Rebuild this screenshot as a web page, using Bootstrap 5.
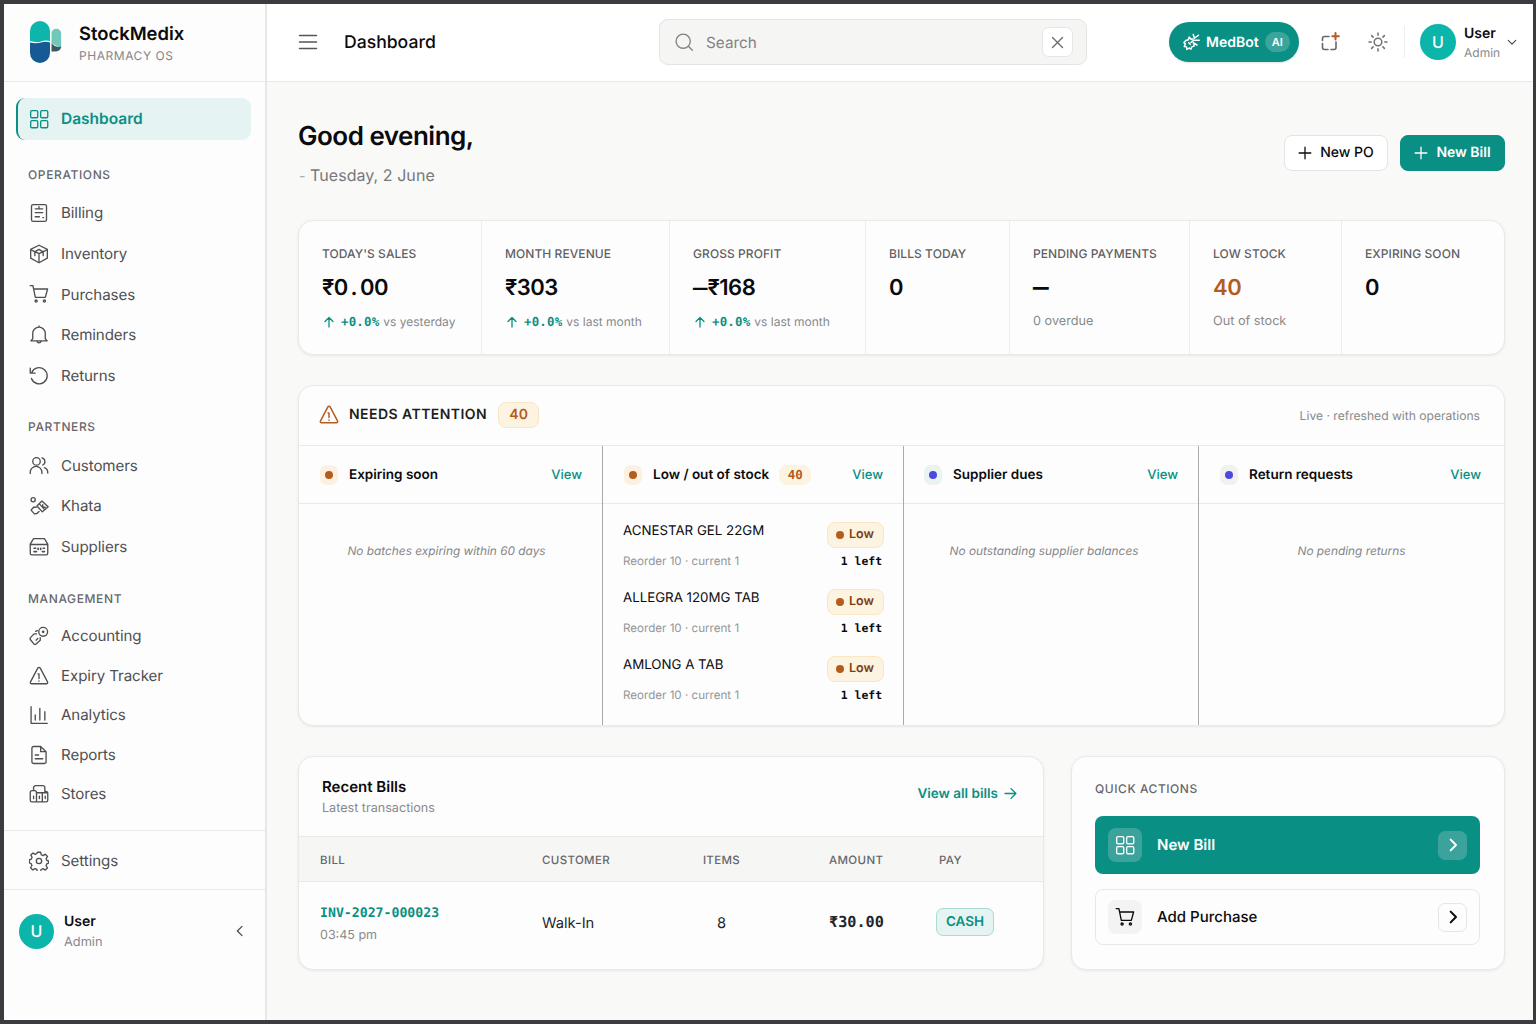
<!DOCTYPE html>
<html lang="en">
<head>
<meta charset="utf-8">
<meta name="viewport" content="width=device-width, initial-scale=1">
<title>StockMedix – Dashboard</title>
<link href="https://cdn.jsdelivr.net/npm/bootstrap@5.3.0/dist/css/bootstrap.min.css" rel="stylesheet">
<style>
:root{--teal:#0a8f84;--teal-bright:#0bb5aa;--amber:#b35c1e;--line:#e9e9e8;--ink:#0b0b0d;--muted:#88898b}
body{font-family:Inter,"Liberation Sans",sans-serif;color:var(--ink);background:#3b3c3f;height:1024px;overflow:hidden;font-size:14px;line-height:1.3;text-rendering:geometricPrecision}
.mono{font-family:"DejaVu Sans Mono","Liberation Mono",monospace;font-weight:700}
svg.ic{width:20px;height:20px;fill:none;stroke:currentColor;stroke-width:1.6;stroke-linecap:round;stroke-linejoin:round;flex:none;display:block}
a{text-decoration:none;color:var(--teal)}
.shell{height:1024px;padding:4px 3px 4px 4px}
.side{width:263px;background:#fdfdfd;border-right:2px solid #e7e7e8;flex:none}
.brandbox{height:78px;border-bottom:1px solid var(--line);padding:0 0 1px 26px;gap:17px}
.brand-name{font-size:18.4px;font-weight:600;line-height:22px;letter-spacing:0;margin-top:2px}
.brand-sub{font-size:12px;line-height:16px;letter-spacing:.55px;color:#85868a;margin-top:3px}
.navarea{height:748px;padding:16px 14px 0 12px}
.navarea .nav-link,.settings{display:flex;align-items:center;gap:12px;padding:0 0 0 13px;font-size:15.1px;letter-spacing:-.08px;color:#4e4f52;height:40.6px}
.navarea .nav-link.active{height:42px;background:#e5f3f2;color:var(--teal);font-weight:600;border-left:2px solid var(--teal);border-radius:9px;padding-left:11px;font-size:15.5px;letter-spacing:0}
.navarea .mgmt .nav-link{height:39.5px}
.grp{font-size:12px;font-weight:500;letter-spacing:.62px;line-height:20px;color:#66676a;padding-left:12px;margin:21.4px 0 8px}
.grp.first{margin-top:25px}
.settings{height:60px;border-top:1px solid var(--line);border-bottom:1px solid var(--line);padding:2px 0 0 25px}
.avatar{width:35px;height:35px;border-radius:50%;background:var(--teal-bright);color:#fff;font-size:16px;font-weight:500;flex:none}
.uname{font-size:14px;font-weight:600;line-height:18px}
.urole{font-size:12.8px;color:var(--muted);line-height:17px}
.pane{background:#f9f9f8;min-width:0}
.topbar{height:78px;background:#fff;border-bottom:1px solid var(--line);padding:0 16px 1px 31px}
.ttl{font-size:17.6px;font-weight:500;margin-left:26px;width:315px;padding-top:2px}
.searchbox{width:428px;height:46px;background:#f5f5f4;border:1px solid #e3e4e4;border-radius:9px;padding:0 13px 0 15px;color:#808184;font-size:15.3px}
.xkey{width:31px;height:30px;background:#fff;border:1px solid #e6e6e6;border-radius:7px;color:#6c6d70}
.medbot{width:130px;height:40px;border-radius:20px;background:var(--teal);color:#fff;font-weight:600;font-size:14px;margin-left:82px;padding:0 9px 0 13px;box-shadow:0 1px 2px rgba(0,0,0,.12)}
.ai{width:26px;height:20px;border-radius:10px;background:#3ba59c;font-size:11px;line-height:20px;text-align:center}
.content{padding:0 28px 0 31px}
.hero{height:138px;padding-top:37px}
.hero h1{font-size:26px;font-weight:600;line-height:36px;letter-spacing:-.5px;margin:0}
.hero .date{font-size:16px;color:#77787a;line-height:22px;margin-top:9px;letter-spacing:.05px;padding-left:1px}
.btn-hero{height:36px;border-radius:8px;font-size:14px;line-height:20px;font-weight:500;padding:0 12px;gap:8px;border:1px solid #e4e4e4;background:#fff;color:var(--ink);margin-top:16px;width:104px;white-space:nowrap;justify-content:center}
.btn-hero.teal{background:var(--teal);border-color:var(--teal);color:#fff;font-weight:600;width:105px}
.panel{background:#fdfdfd;border:1px solid #e9e9e9;border-radius:15px;box-shadow:0 1px 3px rgba(20,20,30,.07);overflow:hidden}
.kpis{height:135px;margin-bottom:30px}
.kpi{padding:25px 0 0 23px;border-right:1px solid #ededed;flex:none}
.kpi:last-child{border-right:0}
.kl{font-size:12px;font-weight:500;color:#5f6063;line-height:16px;letter-spacing:.07px}
.kv{font-size:22px;font-weight:600;line-height:28px;height:28px;margin-top:12px;white-space:nowrap;letter-spacing:-.5px}
.kv .pt{display:inline-block;width:12px;text-align:center}
.kv .dash{font-family:"Liberation Mono",monospace;font-weight:700;letter-spacing:0;line-height:20px}
.ks{font-size:12.7px;line-height:18px;margin-top:11px;color:var(--muted);white-space:nowrap}
.ks.d-flex{font-size:12px}
.ks .mono{font-size:12.4px;color:var(--teal);letter-spacing:.2px}
.ks svg.ic{width:12px;height:12px;stroke-width:2.6;color:var(--teal)}
.attn{height:341px;margin-bottom:30px}
.attn-head{height:60px;border-bottom:1px solid var(--line);padding:0 24px 1px 20px;line-height:20px}
.cnt{background:#fdf3e1;border:1px solid #f9e6c4;color:var(--amber);border-radius:8px;font-weight:600;text-align:center}
.acol{flex:none;border-right:1px solid #a9a9aa}
.acol:last-child{border-right:0}
.acol-h{height:58px;border-bottom:1px solid var(--line);padding:1px 20px 0;font-size:13.5px;font-weight:600;line-height:20px}
.acol-h a{font-weight:500;font-size:13px}
.dotbox{width:18px;height:20px;border-radius:7px;background:#fcf1e0;flex:none}
.dotbox i,.lowtag i{width:8px;height:8px;border-radius:50%;background:var(--amber);display:block;flex:none}
.dotbox.dues{background:#e8f3f2}.dotbox.rets{background:#f1f1f1}
.dotbox.dues i,.dotbox.rets i{background:#4a48de}
.none-msg{font-size:11.85px;font-style:italic;color:#848587;text-align:center;padding-top:38px;line-height:18px}
.item{height:67.2px}
.iname{font-size:13.3px;line-height:18px}
.ireo{font-size:11.6px;line-height:16px;color:#949598;margin-top:13px}
.lowtag{width:57px;height:26px;background:#fdf3e1;border:1px solid #f9e6c6;border-radius:8px;color:#7d4014;font-size:12.5px;font-weight:600;line-height:18px;gap:5px;padding-right:1px}
.left{font-size:11.4px;line-height:16px;margin-top:5px;padding-right:2px}
.bills{width:746px;height:214px}
.bills-head{height:79px;padding:0 26px 0 23px}
.bills table{table-layout:fixed;margin:0;--bs-table-bg:transparent}
.bills th{height:45px;background:#f6f6f5;border-top:1px solid var(--line);border-bottom:1px solid var(--line);font-size:11.5px;line-height:16px;font-weight:500;letter-spacing:.35px;color:#66676a;padding:2px 0 0 21px;vertical-align:middle}
.bills td{height:87px;border:0;padding:0 0 4px 21px;vertical-align:middle;font-size:14.7px}
.cash{display:inline-block;width:58px;height:28px;line-height:26px;text-align:center;border:1px solid #a9dad5;background:#e5f4f2;border-radius:7px;color:var(--teal);font-weight:600;font-size:13.5px;margin-bottom:3px}
.quick{width:434px;height:214px;padding:23px 24px 0 23px}
.qa{border-radius:8px;padding:0 13px;font-size:15px}
.qa.one{height:58px;background:var(--teal);color:#fff;font-weight:600;margin:18px 0 15px}
.qa.two{height:56px;border:1px solid #e8e8e8;font-weight:500;color:var(--ink);padding:0 12px}
.qi{width:34px;height:34px;border-radius:8px;background:#f3f3f3;margin-right:15px}
.one .qi,.one .qc{background:#3ba39b;border-color:#3ba39b}
.qc{width:29px;height:29px;border-radius:7px;border:1px solid #e6e6e6}
</style>
</head>
<body>
<svg class="d-none">
<symbol id="grid" viewBox="0 0 24 24"><rect x="2" y="2" width="8.500" height="8.500" rx="1.500"/><rect x="14" y="2" width="8.500" height="8.500" rx="1.500"/><rect x="2" y="14" width="8.500" height="8.500" rx="1.500"/><rect x="14" y="14" width="8.500" height="8.500" rx="1.500"/></symbol>
<symbol id="cart" viewBox="0 0 24 24"><path d="M1.500 2h3.200L7.600 16h12L22.300 6H5.500"/><circle cx="8.500" cy="20.500" r="1.300"/><circle cx="18.500" cy="20.500" r="1.300"/></symbol>
<symbol id="up" viewBox="0 0 24 24"><path d="M12 22V3M4 11l8-8 8 8"/></symbol>
<symbol id="plus" viewBox="0 0 24 24"><path d="M12 2v20M2 12h20"/></symbol>
<symbol id="chev" viewBox="0 0 24 24"><path d="m8.500 4 8 8-8 8"/></symbol>
<symbol id="alert" viewBox="0 0 24 24"><path d="M10.500 2.500 1.800 19a1.500 1.500 0 0 0 1.300 2.300h17.800a1.500 1.500 0 0 0 1.300-2.300L13.500 2.500a1.700 1.700 0 0 0-3 0z"/><path d="M10.800 9.500H12v5.500M12 18v.2"/></symbol>
</svg>
<div class="shell d-flex">
<aside class="side d-flex flex-column">
  <div class="brandbox d-flex align-items-center">
    <svg width="32" height="43" viewBox="0 0 32 43"><path d="M0 20V10a10 10 0 0 1 20 0v10q-5-1-9 .5t-11-.5z" fill="#0cb6aa"/><path d="M0 21.500q6 1.500 11 0t9 0V32a10 10 0 0 1-20 0z" fill="#155a94"/><path d="M21.500 22.500V12.500a4.800 4.800 0 0 1 9.600 0V27z" fill="#70c8ba"/><path d="M21.500 22.500q5 5 9.600 3a5 5 0 0 1-5 5h-4.600z" fill="#3f5a5c"/></svg>
    <div><div class="brand-name">StockMedix</div><div class="brand-sub">PHARMACY OS</div></div>
  </div>
  <nav class="navarea nav flex-column flex-nowrap">
    <a class="nav-link active" href="#"><svg class="ic"><use href="#grid"/></svg>Dashboard</a>
    <div class="grp first">OPERATIONS</div>
    <a class="nav-link" href="#"><svg class="ic" viewBox="0 0 24 24"><rect x="3" y="2" width="18" height="20" rx="2"/><path d="M7.500 7h9M12 4.500V7M7.500 11.500h9M7.500 16.500h5M16.500 17.500h1"/></svg>Billing</a>
    <a class="nav-link" href="#"><svg class="ic" viewBox="0 0 24 24"><path d="M12 1.500 22 6.500v10.500L12 22.500 2 17V6.500z"/><path d="m2.500 7 9.500 4.500L21.500 7M12 11.500V22M7 9.500V14M17 9.500V14M7 9.500l5-3 5 3"/></svg>Inventory</a>
    <a class="nav-link" href="#"><svg class="ic"><use href="#cart"/></svg>Purchases</a>
    <a class="nav-link" href="#"><svg class="ic" viewBox="0 0 24 24"><path d="M4.500 16.500V10a7.500 7.500 0 0 1 15 0v6.500l2.300 2.500H2.200zM12 2.500V1M9.500 19.500a2.600 2.600 0 0 0 5 0"/></svg>Reminders</a>
    <a class="nav-link" href="#"><svg class="ic" viewBox="0 0 24 24"><path d="M3.200 8A9.700 9.700 0 1 1 3 15M1.500 2.500V8.500h6"/></svg>Returns</a>
    <div class="grp">PARTNERS</div>
    <a class="nav-link" href="#"><svg class="ic" viewBox="0 0 24 24"><circle cx="9" cy="6.500" r="4.500"/><path d="M1.500 21v-1.500a7 7 0 0 1 14 0V21M15.500 2.300a4.500 4.500 0 0 1 1 8.500M18.500 14a6.500 6.500 0 0 1 4 6.500"/></svg>Customers</a>
    <a class="nav-link" href="#"><svg class="ic" viewBox="0 0 24 24"><circle cx="5" cy="4.500" r="2.500"/><path d="M15.500 6 23 13l-7 6-6.500-7zM13 10l5 5.500M16.500 10.500v3h3M8.500 13.500H5.500L2.500 17l4 4.500 3-.5 2.500-2.500"/></svg>Khata</a>
    <a class="nav-link" href="#"><svg class="ic" viewBox="0 0 24 24"><path d="M1.500 8.500 5.500 2h13L22.500 8.500v11a2 2 0 0 1-2 2h-17a2 2 0 0 1-2-2zM1.500 9h21"/><path d="M6 13.500h2M6 17.500h3M11 13.500v1.500M14 13.500v1.500M17 13.500h1.500M16 17.500h2.500" stroke-width="2"/></svg>Suppliers</a>
    <div class="grp">MANAGEMENT</div>
    <div class="mgmt">
    <a class="nav-link" href="#"><svg class="ic" viewBox="0 0 24 24"><circle cx="17" cy="7" r="5.300"/><circle cx="17" cy="7" r=".8"/><path d="M9 9.500H6L1.800 14a2 2 0 0 0 0 2.500l4 5a2 2 0 0 0 2.700 0l5-4.500v-3M8.500 17l2-2M8 6.500l2-1"/></svg>Accounting</a>
    <a class="nav-link" href="#"><svg class="ic"><use href="#alert"/></svg>Expiry Tracker</a>
    <a class="nav-link" href="#"><svg class="ic" viewBox="0 0 24 24"><path d="M2.500 2v20H22M7.500 12v6M13 4v14M19 8v10"/></svg>Analytics</a>
    <a class="nav-link" href="#"><svg class="ic" viewBox="0 0 24 24"><path d="M14 1.800H5.500a2 2 0 0 0-2 2v16.400a2 2 0 0 0 2 2h13a2 2 0 0 0 2-2V8zM14 2v6h6M7.500 12h4M7.500 16.500h9"/></svg>Reports</a>
    <a class="nav-link" href="#"><svg class="ic" viewBox="0 0 24 24"><path d="M5.500 8V4.500A2.500 2.500 0 0 1 8 2h8.500A2.500 2.500 0 0 1 19 4.500V9h1a2.500 2.500 0 0 1 2.500 2.500v8a2 2 0 0 1-2 2h-17a2 2 0 0 1-2-2v-9A2.500 2.500 0 0 1 4 8h2.500A2.500 2.500 0 0 1 9 10.500h13M9 11v10M16 21.500V11M5.500 14.500v3M12.500 14.500v3M19.500 14.500v3"/></svg>Stores</a>
    </div>
  </nav>
  <div class="settings flex-shrink-0"><svg class="ic" viewBox="0 0 24 24"><circle cx="12" cy="12" r="3.200"/><path d="m10 1.500h4l.7 3 2.200 1 2.700-1.700 2.600 2.700-1.600 2.700.9 2.200 2 .6v2.500l-2.200 1-.8 2.200 1.600 2.600-2.600 2.600-2.700-1.700-2.200 1-.7 2.500h-3.800l-.7-2.600-2.200-1-2.700 1.600-2.600-2.600 1.700-2.700-1-2.200-2.100-.8V10.500l2.300-.8.900-2.200-1.500-2.600 2.600-2.500 2.600 1.600 2.100-1z"/></svg>Settings</div>
  <div class="d-flex align-items-center" style="padding:21px 18px 0 15px">
    <div class="avatar d-flex align-items-center justify-content-center">U</div>
    <div style="margin-left:10px;padding-top:2px"><div class="uname">User</div><div class="urole" style="margin-top:3px">Admin</div></div>
    <svg class="ic ms-auto" style="width:14px;height:14px;transform:scaleX(-1);color:#4c4d50;stroke-width:2.200"><use href="#chev"/></svg>
  </div>
</aside>
<main class="pane flex-grow-1">
  <header class="topbar d-flex align-items-center">
    <svg class="ic" viewBox="0 0 20 20" style="color:#55565a;stroke-width:1.500"><path d="M1.500 3.500h17M1.500 10h17M1.500 16.500h17"/></svg>
    <div class="ttl">Dashboard</div>
    <div class="searchbox d-flex align-items-center flex-shrink-0">
      <svg class="ic" viewBox="0 0 24 24" style="margin-left:-1px"><circle cx="11" cy="11" r="8.500"/><path d="m17.500 17.500 4.500 4.500"/></svg><span style="margin-left:12px;padding-top:1px">Search</span>
      <span class="xkey ms-auto d-flex align-items-center justify-content-center"><svg class="ic" viewBox="0 0 24 24" style="width:15px;height:15px;stroke-width:2.200"><path d="m4 4 16 16M20 4 4 20"/></svg></span>
    </div>
    <div class="medbot d-flex align-items-center flex-shrink-0"><svg class="ic" viewBox="0 0 24 24" style="width:18px;height:18px;stroke-width:2"><path d="M8.500 9 5 10l-2.500 3 2 1.500L3 18l3 .5.500 3.500 3-2 2.500 1.500 1-3 3-1v-3.500M8.500 9l1-3.500 3 3 2-.5M15 2l1.500 5 5.500-4M12 12.500l4-3h7M15 13l5 3M9 13l2 2"/></svg><span style="margin:0 6px 0 6px;padding-top:2px">MedBot</span><span class="ai ms-auto">AI</span></div>
    <svg class="ic" viewBox="0 0 20 20" style="margin-left:21px;color:#66676a"><path d="M9 4.500H4.500a2 2 0 0 0-2 2v2M2.500 11.500V15.500a2 2 0 0 0 2 2H8M11 17.500h3a2 2 0 0 0 2-2V10"/><path d="M15.500 1v6.500M12.300 4.200h6.500" stroke="#b35c1e" stroke-width="2"/></svg>
    <svg class="ic" viewBox="0 0 20 20" style="margin-left:28px;color:#707174;stroke-width:1.500"><circle cx="10" cy="10" r="3.800"/><path d="M10 1v2.200M10 16.800V19M1 10h2.200M16.800 10H19M3.600 3.600l1.500 1.500M14.900 14.900l1.500 1.500M3.600 16.400l1.500-1.500M14.900 5.100l1.500-1.500"/></svg>
    <div class="vr flex-shrink-0 align-self-center" style="height:32px;margin:0 15px 0 16px;color:#bbb"></div>
    <div class="avatar d-flex align-items-center justify-content-center" style="width:36px;height:36px">U</div>
    <div style="margin-left:8px;padding-top:2px"><div class="uname">User</div><div class="urole" style="font-size:12px;margin-top:1px">Admin</div></div>
    <svg class="ic ms-auto" viewBox="0 0 24 24" style="width:10px;height:10px;stroke-width:2.800;color:#4c4d50"><path d="m3 8 9 9 9-9"/></svg>
  </header>
  <div class="content">
    <section class="hero d-flex justify-content-between">
      <div><h1>Good evening,</h1><div class="date"><small style="color:#aaa">-</small> Tuesday, 2 June</div></div>
      <div class="d-flex" style="gap:12px">
        <a class="btn-hero d-flex align-items-center" href="#"><svg class="ic" style="width:14px;height:14px;stroke-width:2.200"><use href="#plus"/></svg>New PO</a>
        <a class="btn-hero teal d-flex align-items-center" href="#"><svg class="ic" style="width:14px;height:14px;stroke-width:2.200"><use href="#plus"/></svg>New Bill</a>
      </div>
    </section>
    <section class="panel kpis d-flex">
      <div class="kpi" style="width:183px"><div class="kl">TODAY'S SALES</div><div class="kv">₹0<span class="pt">.</span>00</div><div class="ks d-flex align-items-center"><svg class="ic" style="margin:0 6px 0 1px"><use href="#up"/></svg><span class="mono me-1">+0.0%</span>vs yesterday</div></div>
      <div class="kpi" style="width:188px"><div class="kl">MONTH REVENUE</div><div class="kv">₹303</div><div class="ks d-flex align-items-center"><svg class="ic" style="margin:0 6px 0 1px"><use href="#up"/></svg><span class="mono me-1">+0.0%</span>vs last month</div></div>
      <div class="kpi" style="width:196px"><div class="kl">GROSS PROFIT</div><div class="kv"><span class="dash" style="font-size:24px">—</span>₹168</div><div class="ks d-flex align-items-center"><svg class="ic" style="margin:0 6px 0 1px"><use href="#up"/></svg><span class="mono me-1">+0.0%</span>vs last month</div></div>
      <div class="kpi" style="width:144px"><div class="kl">BILLS TODAY</div><div class="kv">0</div></div>
      <div class="kpi" style="width:180px"><div class="kl">PENDING PAYMENTS</div><div class="kv"><span class="dash" style="font-size:26px">—</span></div><div class="ks">0 overdue</div></div>
      <div class="kpi" style="width:152px"><div class="kl">LOW STOCK</div><div class="kv" style="color:var(--amber)">40</div><div class="ks">Out of stock</div></div>
      <div class="kpi"><div class="kl">EXPIRING SOON</div><div class="kv">0</div></div>
    </section>
    <section class="panel attn">
      <div class="attn-head d-flex align-items-center">
        <svg class="ic" style="color:var(--amber);stroke-width:1.800"><use href="#alert"/></svg>
        <span style="font-size:14px;font-weight:600;letter-spacing:.45px;margin:0 11px 0 10px;color:#1d1e20">NEEDS ATTENTION</span>
        <span class="cnt" style="width:41px;height:26px;line-height:24px;font-size:14px">40</span>
        <span class="ms-auto" style="font-size:12.100px;color:var(--muted);padding-top:1px">Live · refreshed with operations</span>
      </div>
      <div class="d-flex" style="height:280px">
        <div class="acol" style="width:304px">
          <div class="acol-h d-flex align-items-center"><span class="dotbox d-flex align-items-center justify-content-center" style="margin:0 11px 0 1px"><i></i></span>Expiring soon<a class="ms-auto" href="#">View</a></div>
          <div class="none-msg" style="padding-right:8px">No batches expiring within 60 days</div>
        </div>
        <div class="acol" style="width:301px">
          <div class="acol-h d-flex align-items-center"><span class="dotbox d-flex align-items-center justify-content-center" style="margin:0 11px 0 1px"><i></i></span>Low / out of stock<span class="cnt mono" style="width:32px;height:20px;line-height:19px;font-size:12.500px;margin-left:10px;border:0">40</span><a class="ms-auto" href="#">View</a></div>
          <div style="padding:18px 19px 0 20px">
            <div class="item d-flex justify-content-between"><div><div class="iname">ACNESTAR GEL 22GM</div><div class="ireo">Reorder 10 · current 1</div></div><div class="text-end"><div class="lowtag d-flex align-items-center justify-content-center"><i></i>Low</div><div class="left mono">1 left</div></div></div>
            <div class="item d-flex justify-content-between"><div><div class="iname">ALLEGRA 120MG TAB</div><div class="ireo">Reorder 10 · current 1</div></div><div class="text-end"><div class="lowtag d-flex align-items-center justify-content-center"><i></i>Low</div><div class="left mono">1 left</div></div></div>
            <div class="item d-flex justify-content-between"><div><div class="iname">AMLONG A TAB</div><div class="ireo">Reorder 10 · current 1</div></div><div class="text-end"><div class="lowtag d-flex align-items-center justify-content-center"><i></i>Low</div><div class="left mono">1 left</div></div></div>
          </div>
        </div>
        <div class="acol" style="width:295px">
          <div class="acol-h d-flex align-items-center"><span class="dotbox dues d-flex align-items-center justify-content-center" style="margin-right:11px"><i></i></span>Supplier dues<a class="ms-auto" href="#">View</a></div>
          <div class="none-msg" style="padding-right:14px">No outstanding supplier balances</div>
        </div>
        <div class="acol flex-grow-1">
          <div class="acol-h d-flex align-items-center" style="padding-right:23px"><span class="dotbox rets d-flex align-items-center justify-content-center" style="margin:0 11px 0 1px"><i></i></span>Return requests<a class="ms-auto" href="#">View</a></div>
          <div class="none-msg">No pending returns</div>
        </div>
      </div>
    </section>
    <div class="d-flex justify-content-between">
      <section class="panel bills">
        <div class="bills-head d-flex align-items-center justify-content-between">
          <div style="padding-top:2px"><div style="font-size:15px;font-weight:600;line-height:20px">Recent Bills</div><div style="font-size:12.600px;color:var(--muted);line-height:18px;margin-top:3px">Latest transactions</div></div>
          <a class="d-flex align-items-center" href="#" style="font-size:13.500px;line-height:20px;font-weight:600;gap:6px;padding-bottom:6px">View all bills<svg class="ic" viewBox="0 0 24 24" style="width:13px;height:13px;stroke-width:2.600"><path d="M2 12h20M13 3l9 9-9 9"/></svg></a>
        </div>
        <table class="table">
          <colgroup><col style="width:222px"><col style="width:160px"><col style="width:81px"><col style="width:153px"><col></colgroup>
          <thead><tr><th>BILL</th><th>CUSTOMER</th><th class="text-center ps-0">ITEMS</th><th style="padding-left:67px">AMOUNT</th><th style="padding-left:24px">PAY</th></tr></thead>
          <tbody><tr>
            <td style="padding-bottom:0"><div class="mono" style="color:var(--teal);font-size:13.200px;line-height:18px">INV-2027-000023</div><div style="font-size:12.500px;color:var(--muted);line-height:18px;margin-top:4px">03:45 pm</div></td>
            <td>Walk-In</td><td class="text-center ps-0">8</td>
            <td class="mono" style="padding-left:67px;font-size:15.200px">₹30.00</td>
            <td><span class="cash">CASH</span></td></tr></tbody>
        </table>
      </section>
      <section class="panel quick">
        <div style="font-size:12px;font-weight:500;letter-spacing:.55px;color:#66676a;line-height:18px">QUICK ACTIONS</div>
        <a class="qa one d-flex align-items-center" href="#"><span class="qi d-flex align-items-center justify-content-center"><svg class="ic"><use href="#grid"/></svg></span>New Bill<span class="qc ms-auto d-flex align-items-center justify-content-center"><svg class="ic" style="width:16px;height:16px;stroke-width:3"><use href="#chev"/></svg></span></a>
        <a class="qa two d-flex align-items-center" href="#"><span class="qi d-flex align-items-center justify-content-center"><svg class="ic"><use href="#cart"/></svg></span>Add Purchase<span class="qc ms-auto d-flex align-items-center justify-content-center"><svg class="ic" style="width:16px;height:16px;stroke-width:3"><use href="#chev"/></svg></span></a>
      </section>
    </div>
  </div>
</main>
</div>
<script src="https://cdn.jsdelivr.net/npm/bootstrap@5.3.0/dist/js/bootstrap.bundle.min.js"></script>
</body>
</html>
